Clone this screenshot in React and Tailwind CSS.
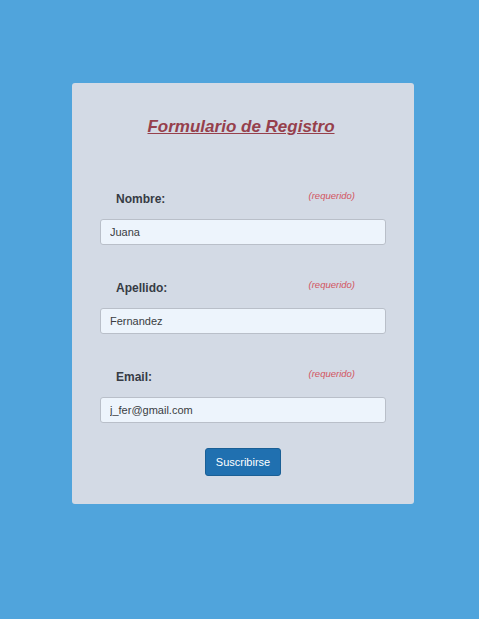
import React from 'react';

const fields = [
  { label: 'Nombre:', value: 'Juana' },
  { label: 'Apellido:', value: 'Fernandez' },
  { label: 'Email:', value: 'j_fer@gmail.com' },
];

export default function App() {
  return (
    <div
      className="min-h-[619px] bg-[#50a4dc] pt-[83px]"
      style={{ fontFamily: '"Liberation Sans", Arial, sans-serif' }}
    >
      <form className="ml-[72px] w-[342px] rounded-[3px] bg-[#d3dae5] px-[28px] pb-[28px] pt-[33px]">
        <h1 className="pr-[4px] text-center text-[17px] font-bold italic leading-[22px] text-[#96404c] underline">
          Formulario de Registro
        </h1>
        <div className="mt-[53px]">
          {fields.map((f, i) => (
            <div key={f.label} className={i > 0 ? 'mt-[35px]' : ''}>
              <div className="flex items-start justify-between pl-[16px] pr-[31px]">
                <label className="text-[12px] font-bold leading-[16px] text-[#363b44]">
                  {f.label}
                </label>
                <span className="mt-[-1px] text-[9.5px] italic leading-[12px] text-[#d2545e]">
                  (requerido)
                </span>
              </div>
              <input
                readOnly
                value={f.value}
                className="mt-[12px] block h-[26px] w-[286px] rounded-[3px] border border-[#b9bfc9] bg-[#edf4fc] px-[9px] text-[11px] text-[#3a3d42] outline-none"
              />
            </div>
          ))}
        </div>
        <div className="mt-[25px] flex justify-center">
          <button
            type="button"
            className="h-[28px] w-[76px] rounded-[3px] border border-[#1a5f95] bg-[#2070b0] text-[11px] text-white"
          >
            Suscribirse
          </button>
        </div>
      </form>
    </div>
  );
}
